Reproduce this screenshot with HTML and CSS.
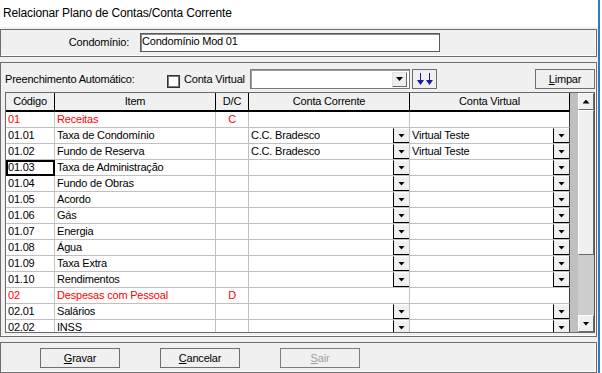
FILE: index.html
```html
<!DOCTYPE html>
<html lang="pt-BR">
<head>
  <meta charset="UTF-8" />
  <title>Relacionar Plano de Contas/Conta Corrente</title>
  <link rel="stylesheet" href="styles.css">
</head>
<body>
  <div class="window">
    <div class="titlebar">Relacionar Plano de Contas/Conta Corrente</div>

    <div class="form">
      <div class="panel panel-top">
        <label class="lbl">Condomínio:</label>
        <div class="edit">Condomínio Mod 01</div>
      </div>

      <div class="panel panel-main">
        <div class="toolbar">
          <span class="auto-label">Preenchimento Automático:</span>
          <span class="check"></span>
          <span class="check-label">Conta Virtual</span>
          <div class="combo"><span class="combo-btn arrow-down"></span></div>
          <button class="btn-fill" title="Preencher">
            <svg width="16" height="13" viewBox="0 0 16 13">
              <rect x="3" y="0" width="1" height="8" fill="#1a1aa0"/>
              <polygon points="0,7 7,7 3.5,12" fill="#1a1aa0"/>
              <rect x="12" y="0" width="1" height="8" fill="#1a1aa0"/>
              <polygon points="9,7 16,7 12.5,12" fill="#1a1aa0"/>
            </svg>
          </button>
          <button class="btn btn-clear"><u>L</u>impar</button>
        </div>

        <div class="grid">
          <div class="grid-view">
            <div class="row head">
              <div class="c">Código</div>
              <div class="c">Item</div>
              <div class="c">D/C</div>
              <div class="c">Conta Corrente</div>
              <div class="c">Conta Virtual</div>
            </div>

            <div class="row grp">
              <div class="c">01</div>
              <div class="c">Receitas</div>
              <div class="c dc">C</div>
              <div class="c"></div>
              <div class="c"></div>
            </div>
            <div class="row">
              <div class="c">01.01</div>
              <div class="c">Taxa de Condomínio</div>
              <div class="c dc"></div>
              <div class="c cb"><span>C.C. Bradesco</span><i class="dd arrow-down"></i></div>
              <div class="c cb"><span>Virtual Teste</span><i class="dd arrow-down"></i></div>
            </div>
            <div class="row">
              <div class="c">01.02</div>
              <div class="c">Fundo de Reserva</div>
              <div class="c dc"></div>
              <div class="c cb"><span>C.C. Bradesco</span><i class="dd arrow-down"></i></div>
              <div class="c cb"><span>Virtual Teste</span><i class="dd arrow-down"></i></div>
            </div>
            <div class="row">
              <div class="c focus">01.03</div>
              <div class="c">Taxa de Administração</div>
              <div class="c dc"></div>
              <div class="c cb"><span></span><i class="dd arrow-down"></i></div>
              <div class="c cb"><span></span><i class="dd arrow-down"></i></div>
            </div>
            <div class="row">
              <div class="c">01.04</div>
              <div class="c">Fundo de Obras</div>
              <div class="c dc"></div>
              <div class="c cb"><span></span><i class="dd arrow-down"></i></div>
              <div class="c cb"><span></span><i class="dd arrow-down"></i></div>
            </div>
            <div class="row">
              <div class="c">01.05</div>
              <div class="c">Acordo</div>
              <div class="c dc"></div>
              <div class="c cb"><span></span><i class="dd arrow-down"></i></div>
              <div class="c cb"><span></span><i class="dd arrow-down"></i></div>
            </div>
            <div class="row">
              <div class="c">01.06</div>
              <div class="c">Gás</div>
              <div class="c dc"></div>
              <div class="c cb"><span></span><i class="dd arrow-down"></i></div>
              <div class="c cb"><span></span><i class="dd arrow-down"></i></div>
            </div>
            <div class="row">
              <div class="c">01.07</div>
              <div class="c">Energia</div>
              <div class="c dc"></div>
              <div class="c cb"><span></span><i class="dd arrow-down"></i></div>
              <div class="c cb"><span></span><i class="dd arrow-down"></i></div>
            </div>
            <div class="row">
              <div class="c">01.08</div>
              <div class="c">Água</div>
              <div class="c dc"></div>
              <div class="c cb"><span></span><i class="dd arrow-down"></i></div>
              <div class="c cb"><span></span><i class="dd arrow-down"></i></div>
            </div>
            <div class="row">
              <div class="c">01.09</div>
              <div class="c">Taxa Extra</div>
              <div class="c dc"></div>
              <div class="c cb"><span></span><i class="dd arrow-down"></i></div>
              <div class="c cb"><span></span><i class="dd arrow-down"></i></div>
            </div>
            <div class="row">
              <div class="c">01.10</div>
              <div class="c">Rendimentos</div>
              <div class="c dc"></div>
              <div class="c cb"><span></span><i class="dd arrow-down"></i></div>
              <div class="c cb"><span></span><i class="dd arrow-down"></i></div>
            </div>
            <div class="row grp">
              <div class="c">02</div>
              <div class="c">Despesas com Pessoal</div>
              <div class="c dc">D</div>
              <div class="c"></div>
              <div class="c"></div>
            </div>
            <div class="row">
              <div class="c">02.01</div>
              <div class="c">Salários</div>
              <div class="c dc"></div>
              <div class="c cb"><span></span><i class="dd arrow-down"></i></div>
              <div class="c cb"><span></span><i class="dd arrow-down"></i></div>
            </div>
            <div class="row">
              <div class="c">02.02</div>
              <div class="c">INSS</div>
              <div class="c dc"></div>
              <div class="c cb"><span></span><i class="dd arrow-down"></i></div>
              <div class="c cb"><span></span><i class="dd arrow-down"></i></div>
            </div>
          </div>

          <div class="grid-gap"></div>

          <div class="vscroll">
            <div class="sb-btn"><span class="arrow-up"></span></div>
            <div class="sb-thumb"></div>
            <div class="sb-track"></div>
            <div class="sb-btn"><span class="arrow-down"></span></div>
          </div>
        </div>
      </div>

      <div class="panel panel-bottom">
        <button class="btn"><u>G</u>ravar</button>
        <button class="btn"><u>C</u>ancelar</button>
        <button class="btn btn-exit" disabled><u>S</u>air</button>
      </div>
    </div>
  </div>
</body>
</html>
```

FILE: styles.css
```css
* {
  box-sizing: border-box;
}

body {
  margin: 0;
  background: #fff;
  font-family: "Liberation Sans", Arial, sans-serif;
  font-size: 11px;
  letter-spacing: -0.2px;
  color: #000;
}

.window {
  width: 600px;
  height: 373px;
  overflow: hidden;
  background: #f0f0f0;
  border-right: 2px solid #2a7ad5;
}

.titlebar {
  height: 27px;
  background: #fff;
  padding-left: 3px;
  font-size: 12px;
  letter-spacing: -0.15px;
  line-height: 27px;
}

.form {
  display: flex;
  flex-direction: column;
  gap: 5px;
  padding-top: 2px;
}

.panel {
  width: 597px;
  border: 1px solid #6d6d6d;
  box-shadow: inset -1px -1px 0 #fff;
}

/* condominio */
.panel-top {
  height: 28px;
  display: flex;
  align-items: flex-start;
  padding-top: 3px;
}

.lbl {
  width: 128px;
  margin-right: 11px;
  text-align: right;
  line-height: 19px;
}

.edit {
  width: 300px;
  height: 19px;
  background: #fff;
  border: 1px solid #5a5a5a;
  box-shadow: inset 1px 1px 0 #8b8b8b;
  line-height: 15px;
  padding-left: 1px;
}

/* grade */
.panel-main {
  height: 275px;
  padding: 6px 1px 3px 4px;
}

.toolbar {
  display: flex;
  align-items: flex-start;
  height: 20px;
  line-height: 21px;
}

.auto-label {
  width: 162px;
}

.check {
  width: 13px;
  height: 13px;
  margin-top: 6px;
  background: #fff;
  border: 1px solid #333;
  box-shadow: inset 0 0 0 1px #7a7a7a;
}

.check-label {
  width: 66px;
  margin-left: 4px;
}

.combo {
  width: 160px;
  height: 20px;
  display: flex;
  justify-content: flex-end;
  align-items: center;
  padding-right: 2px;
  background: #fff;
  border: 1px solid #7a7a7a;
  box-shadow: inset 1px 1px 0 #a0a0a0;
}

.combo-btn {
  width: 15px;
  height: 15px;
  display: flex;
  align-items: center;
  justify-content: center;
  background: #f0f0f0;
  border: 1px solid;
  border-color: #e3e3e3 #6d6d6d #6d6d6d #e3e3e3;
}

.btn-fill {
  width: 25px;
  height: 20px;
  margin-left: 2px;
  padding: 0;
  display: flex;
  align-items: center;
  justify-content: center;
  background: #f0f0f0;
  border: 1px solid #6d6d6d;
}

.btn {
  width: 80px;
  height: 20px;
  padding: 0;
  font: inherit;
  letter-spacing: inherit;
  line-height: 18px;
  color: #000;
  background: #f0f0f0;
  border: 1px solid #6f6f6f;
}

.btn-clear {
  width: 60px;
  margin-left: auto;
}

.grid {
  display: flex;
  height: 241px;
  margin-top: 3px;
  border: 1px solid #696969;
  border-right: 0;
}

.grid-view {
  width: 564px;
  overflow: hidden;
  background: #fff;
}

.grid-gap {
  width: 8px;
  background: #c0c0c0;
}

.row {
  display: grid;
  grid-template-columns: 49px 161px 33px 161px 160px;
  height: 16px;
}

.c {
  border-right: 1px solid #c0c0c0;
  border-bottom: 1px solid #c0c0c0;
  padding-left: 2px;
  line-height: 15px;
  white-space: nowrap;
  overflow: hidden;
}

.row > .c:last-child {
  border-right-color: #3c3c3c;
}

.row.head {
  height: 19px;
  background: #f0f0f0;
}

.row.head .c {
  border-right-color: #000;
  border-bottom: 2px solid #000;
  padding-left: 0;
  text-align: center;
  line-height: 17px;
}

.grp {
  color: #f00;
}

.dc {
  padding-left: 0;
  text-align: center;
}

.cb {
  display: flex;
}

.cb span {
  flex: 1;
}

.dd {
  width: 16px;
  height: 15px;
  display: flex;
  align-items: center;
  justify-content: center;
  background: #f0f0f0;
  border-left: 1px solid #000;
  border-bottom: 1px solid #000;
  border-top: 1px solid #fff;
}

.focus {
  outline: 2px solid #000;
  outline-offset: -2px;
}

.arrow-down::after,
.arrow-up::after {
  content: "";
  display: block;
  width: 7px;
  height: 4px;
  background: #000;
}

.arrow-down::after {
  clip-path: polygon(0 0, 100% 0, 50% 100%);
}

.arrow-up::after {
  clip-path: polygon(50% 0, 100% 100%, 0 100%);
}

/* barra de rolagem */
.vscroll {
  width: 17px;
  display: flex;
  flex-direction: column;
  background: #cdcdcd;
  border-right: 1px solid #555;
}

.sb-btn,
.sb-thumb {
  background: #f0f0f0;
  border: 1px solid;
  border-color: #fff #696969 #696969 #fff;
}

.sb-btn {
  height: 17px;
  display: flex;
  align-items: center;
  justify-content: center;
}

.sb-thumb {
  height: 145px;
}

.sb-track {
  flex: 1;
}

/* rodape */
.panel-bottom {
  height: 31px;
  display: flex;
  padding: 5px 0 0 39px;
}

.panel-bottom .btn + .btn {
  margin-left: 40px;
}

.panel-bottom .btn-exit {
  margin-left: 240px;
  color: #a0a0a0;
  border-color: #7d7d7d;
}
```
